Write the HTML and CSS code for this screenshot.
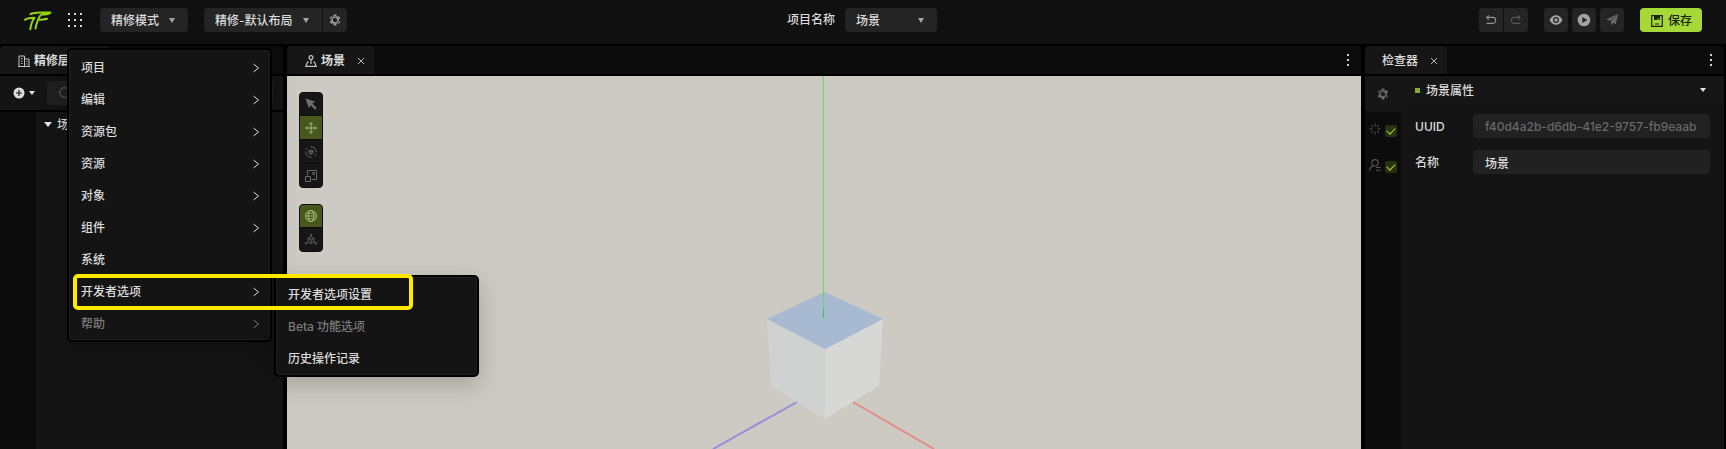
FILE: index.html
```html
<!DOCTYPE html>
<html lang="zh-CN">
<head>
<meta charset="utf-8">
<title>场景编辑器</title>
<link rel="stylesheet" href="styles.css">
</head>
<body>
<div class="app">
  <header class="topbar">
    <div class="topbar-left">
      <svg class="logo" viewBox="0 0 28 21" width="28" height="21" aria-hidden="true">
        <g fill="none" stroke="#93d414" stroke-linecap="round" stroke-linejoin="round">
          <path d="M6.500 4.200C9 2.800 12 2.500 16 2.500H26.500C25 4.300 22 4.600 18 4.600C15 4.800 12 15 11.500 18.500" stroke-width="2"/>
          <path d="M15.500 9.800C18.500 9.300 20.500 9.600 23 8.800" stroke-width="2"/>
          <path d="M1 9.800C3.500 8.200 6 7.800 10.500 7.800C8.500 10 7 14 6.300 19.300" stroke-width="2"/>
        </g>
      </svg>
      <button class="apps" aria-label="菜单">
        <svg viewBox="0 0 14 14" width="14" height="14" fill="#d8d8d8"><path d="M0 0h2v2H0zM6 0h2v2H6zM12 0h2v2h-2zM0 6h2v2H0zM6 6h2v2H6zM12 6h2v2h-2zM0 12h2v2H0zM6 12h2v2H6zM12 12h2v2h-2z"/></svg>
      </button>
      <span class="select mode"><select aria-label="模式"><option>精修模式</option></select></span>
      <div class="joined">
        <span class="select layout"><select aria-label="布局"><option>精修-默认布局</option></select></span>
        <button class="tool" aria-label="布局设置"><svg class="gear" viewBox="0 0 24 24" width="12" height="12"><use href="#gear"/></svg></button>
      </div>
    </div>
    <div class="project">
      <label for="project">项目名称</label>
      <span class="select scene"><select id="project"><option>场景</option></select></span>
    </div>
    <div class="topbar-right">
      <div class="joined">
        <button class="tool" aria-label="撤销"><svg viewBox="0 0 14 14" width="12" height="12" fill="none" stroke="#929292" stroke-width="1.300"><path d="M4.500 1.500L2 4l2.500 2.500M2 4h7a3.500 3.500 0 0 1 0 7H2"/></svg></button>
        <button class="tool" aria-label="重做"><svg viewBox="0 0 14 14" width="12" height="12" fill="none" stroke="#575757" stroke-width="1.300"><path d="M9.500 1.500L12 4L9.500 6.500M12 4H5a3.500 3.500 0 0 0 0 7h7"/></svg></button>
      </div>
      <div class="actions">
        <button class="tool" aria-label="预览"><svg viewBox="0 0 14 14" width="14" height="14"><path d="M.5 7C2 4 4.200 2.200 7 2.200S12 4 13.500 7C12 10 9.800 11.800 7 11.800S2 10 .5 7z" fill="#a2a2a2"/><circle cx="7" cy="7" r="3" fill="#292929"/><circle cx="7" cy="7" r="1.700" fill="#a2a2a2"/></svg></button>
        <button class="tool" aria-label="播放"><svg viewBox="0 0 14 14" width="14" height="14"><circle cx="7" cy="7" r="6.300" fill="#a2a2a2"/><path d="M5.300 4v6l5-3z" fill="#242424"/></svg></button>
        <button class="tool" aria-label="发布"><svg viewBox="0 0 14 14" width="14" height="14" fill="#686868"><path d="M13 1L1 6.500l4.300 1.200zM13 1L5.900 8.200l.3 4.500 1.900-2.900 2.700 1.400z"/></svg></button>
      </div>
      <button class="save"><svg viewBox="0 0 12 12" width="12" height="12"><path d="M.7.7h10.600v10.600H.7z" fill="none" stroke="#1b230a" stroke-width="1.200"/><path d="M3 1h6v4H7.500V3h-1v2H3zM4 8.500h4v1H4z" fill="#1b230a"/></svg>保存</button>
    </div>
  </header>

  <main class="workspace">
    <section class="panel hierarchy">
      <div class="tabs">
        <div class="tab tab-hierarchy">
          <svg viewBox="0 0 12 12" width="12" height="12" fill="none" stroke="#c4c4c4"><path d="M1 11.300V1h5.500v10.300M6.500 4H11v7.300M0 11.500h12M3 3.500h1.500M3 6h1.500M3 8.500h1.500M8.200 6.500h1.200M8.200 9h1.200"/></svg>
          <span>精修层级</span>
        </div>
      </div>
      <div class="hierarchy-bar">
        <button class="add" aria-label="添加"><svg viewBox="0 0 12 12" width="12" height="12"><circle cx="6" cy="6" r="5.500" fill="#dedede"/><path d="M6 3v6M3 6h6" stroke="#161616" stroke-width="1.200"/></svg><i class="caret"></i></button>
        <label class="search"><svg viewBox="0 0 12 12" width="12" height="12" fill="none" stroke="#686868"><circle cx="5.500" cy="5.500" r="4.800"/><path d="M9 9l2.500 2.500"/></svg><input type="search" aria-label="搜索"></label>
      </div>
      <div class="tree">
        <div class="tree-gutter"></div>
        <div class="tree-row"><i class="caret tree-caret"></i>场景</div>
      </div>
    </section>

    <section class="panel viewport">
      <div class="tabs">
        <div class="tab tab-scene">
          <svg viewBox="0 0 12 12" width="12" height="12" fill="none" stroke="#c4c4c4" stroke-width="1.200"><circle cx="6" cy="2.500" r="1.900"/><path d="M6 4.500V9M3.700 7H2.500L.8 11.300h10.400L9.500 7H8.300"/></svg>
          <span>场景</span>
          <button class="close" aria-label="关闭"><svg viewBox="0 0 8 8" width="8" height="8"><path d="M1 1l6 6M7 1L1 7"/></svg></button>
        </div>
        <button class="more" aria-label="更多"><svg viewBox="0 0 2 12" width="2" height="12"><path d="M0 0h2v2H0zM0 5h2v2H0zM0 10h2v2H0z"/></svg></button>
      </div>
      <div class="stage">
        <svg class="scene3d" viewBox="0 0 1074 373" preserveAspectRatio="xMidYMin slice" role="img" aria-label="立方体">
          <path d="M510 326L426 373" stroke="#958cdc" stroke-width="2"/>
          <path d="M566 326L647 373" stroke="#e58b85" stroke-width="2"/>
          <path d="M480 243L538 273V343L484 310z" fill="#d0d2d1"/>
          <path d="M596 243L538 273V343L592 310z" fill="#d7d7d5"/>
          <path d="M537.500 216L596 243L538 273L480 243z" fill="#a8b9d2"/>
          <path d="M536.500 0V242" stroke="#62e05e"/>
          <path d="M536.500 233V242" stroke="#2fcb4b"/>
        </svg>
        <div class="toolbars">
          <div class="toolset">
            <button aria-label="选择"><svg viewBox="0 0 12 12" width="12" height="12" fill="#6e6e6e"><path d="M.5.5l9.800 3.300-3 1.800 4.400 4.500-1.600 1.600-4.400-4.500-1.900 3z"/></svg></button>
            <button class="on" aria-label="移动"><svg viewBox="0 0 12 12" width="12" height="12" fill="none" stroke="#a9bd7b"><path d="M6 .7v10.600M.7 6h10.600M4.300 2.300L6 .7l1.700 1.600M4.300 9.700L6 11.300l1.700-1.600M2.300 4.300L.7 6l1.600 1.700M9.700 4.300L11.300 6 9.700 7.700"/></svg></button>
            <button aria-label="旋转"><svg viewBox="0 0 12 12" width="12" height="12" fill="none" stroke="#666"><path d="M5.500.7A5.300 5.300 0 0 1 11.300 6.500M.7 5.500A5.300 5.300 0 0 0 6.500 11.300M1 3.700L2.300 2M9.700 10L11 8.300"/><path d="M6 3.700l2.200 1.200v2.300L6 8.400 3.800 7.200V4.900zM3.800 4.900L6 6l2.200-1.100M6 6v2.400"/></svg></button>
            <button aria-label="缩放"><svg viewBox="0 0 12 12" width="12" height="12" fill="none" stroke="#666"><path d="M2.500 5.500v-5h9v9h-5M.5 6.500h5v5h-5zM7 5L9 3M7 2.700h2.300V5"/></svg></button>
          </div>
          <div class="toolset">
            <button class="on" aria-label="世界坐标"><svg viewBox="0 0 12 12" width="12" height="12" fill="none" stroke="#a9bd7b" stroke-width=".9"><circle cx="6" cy="6" r="5.500"/><ellipse cx="6" cy="6" rx="2.800" ry="5.500"/><path d="M.5 6h11M1.500 3.200h9M1.500 8.800h9"/></svg></button>
            <button aria-label="本地坐标"><svg viewBox="0 0 12 12" width="12" height="12" fill="none" stroke="#666" stroke-width=".9"><path d="M6 2.700l3 1.600v3.500L6 9.500 3 7.800V4.300zM3 4.300L6 6l3-1.700M6 6v3.500M6 .3v2.400M3 7.800L.5 9.700M9 7.800l2.500 1.900M5 1.200l1-.9 1 .9M.5 8.300v1.600h1.700M11.500 8.300v1.600H9.800"/></svg></button>
          </div>
        </div>
      </div>
    </section>

    <section class="panel inspector">
      <div class="tabs">
        <div class="tab tab-inspector"><span>检查器</span>
          <button class="close" aria-label="关闭"><svg viewBox="0 0 8 8" width="8" height="8"><path d="M1 1l6 6M7 1L1 7"/></svg></button>
        </div>
        <button class="more" aria-label="更多"><svg viewBox="0 0 2 12" width="2" height="12"><path d="M0 0h2v2H0zM0 5h2v2H0zM0 10h2v2H0z"/></svg></button>
      </div>
      <div class="inspector-body">
        <div class="rail">
          <button class="rail-tab" aria-label="属性"><svg class="gear dim" viewBox="0 0 24 24" width="12" height="12"><use href="#gear"/></svg></button>
          <label class="rail-item"><svg viewBox="0 0 12 12" width="12" height="12" fill="none" stroke="#5a5a5a"><path d="M6 .5v3M6 8.500v3M.5 6h3M8.500 6h3M2.100 2.100l2 2M7.900 7.900l2 2M2.100 9.900l2-2M7.900 4.100l2-2"/></svg><input type="checkbox" checked aria-label="特效"></label>
          <label class="rail-item"><svg viewBox="0 0 12 12" width="12" height="12" fill="none" stroke="#5a5a5a" stroke-width="1.100"><circle cx="6" cy="3.800" r="3.200"/><path d="M4.300 6.700C2 7.500.8 9 .6 11.800M7 8.500h4.500M7 11.300h4.500"/></svg><input type="checkbox" checked aria-label="角色"></label>
        </div>
        <div class="properties">
          <button class="section-title"><i class="mark"></i>场景属性<i class="caret"></i></button>
          <div class="fields">
            <label for="uuid">UUID</label><input id="uuid" class="muted" value="f40d4a2b-d6db-41e2-9757-fb9eaab" readonly>
            <label for="name">名称</label><input id="name" value="场景">
          </div>
        </div>
      </div>
    </section>
  </main>

  <ul class="menu main-menu">
    <li><button>项目<svg class="chev" viewBox="0 0 6 8"><path d="M.5 0L5.500 4 .5 8"/></svg></button></li>
    <li><button>编辑<svg class="chev" viewBox="0 0 6 8"><path d="M.5 0L5.500 4 .5 8"/></svg></button></li>
    <li><button>资源包<svg class="chev" viewBox="0 0 6 8"><path d="M.5 0L5.500 4 .5 8"/></svg></button></li>
    <li><button>资源<svg class="chev" viewBox="0 0 6 8"><path d="M.5 0L5.500 4 .5 8"/></svg></button></li>
    <li><button>对象<svg class="chev" viewBox="0 0 6 8"><path d="M.5 0L5.500 4 .5 8"/></svg></button></li>
    <li><button>组件<svg class="chev" viewBox="0 0 6 8"><path d="M.5 0L5.500 4 .5 8"/></svg></button></li>
    <li><button>系统</button></li>
    <li><button>开发者选项<svg class="chev" viewBox="0 0 6 8"><path d="M.5 0L5.500 4 .5 8"/></svg></button></li>
    <li><button class="faded">帮助<svg class="chev" viewBox="0 0 6 8"><path d="M.5 0L5.500 4 .5 8"/></svg></button></li>
  </ul>
  <ul class="menu sub-menu">
    <li><button>开发者选项设置</button></li>
    <li><button class="faded">Beta 功能选项</button></li>
    <li><button>历史操作记录</button></li>
  </ul>
  <div class="highlight"></div>
</div>
<svg class="defs" aria-hidden="true">
  <symbol id="gear" viewBox="0 0 24 24"><path d="M12 4a8 8 0 1 0 0 16 8 8 0 1 0 0-16zM9.500 1h5l.8 4H8.700zM9.500 23h5l.8-4H8.700zM1.500 8.500L4 4.300l4 1.500-3 5.300zM22.500 8.500L20 4.300l-4 1.500 3 5.300zM1.500 15.500L4 19.700l4-1.500-3-5.300zM22.500 15.500L20 19.700l-4-1.500 3-5.300z"/><circle class="gear-hole" cx="12" cy="12" r="4.500"/></symbol>
</svg>
</body>
</html>
```
FILE: styles.css
```css
* { box-sizing: border-box; }
body {
  margin: 0;
  background: #000;
  color: #dcdcdc;
  font: 500 12px/16px Inter, "Noto Sans CJK SC", sans-serif;
}
button, input, select { font: inherit; color: inherit; border: 0; margin: 0; padding: 0; background: none; outline: 0; }
button { display: inline-flex; align-items: center; }
svg { display: block; flex: none; }
.defs { position: absolute; width: 0; height: 0; }
.app { position: relative; display: flex; flex-direction: column; min-height: 100vh; overflow: hidden; }

.topbar {
  display: grid;
  grid-template-columns: 1fr auto 1fr;
  align-items: center;
  padding: 8px 24px 12px 22px;
  background: #101010;
}
.topbar-left, .topbar-right, .project, .joined, .actions { display: flex; align-items: center; }
.topbar-left { gap: 16px; padding-left: 2px; }
.topbar-right { justify-content: flex-end; gap: 16px; }
.apps { margin-right: 2px; }
.project { gap: 10px; }
.joined { gap: 1px; }
.actions { gap: 4px; }
.joined > :first-child, .joined > :first-child select { border-radius: 4px 0 0 4px; }
.joined > :last-child { border-radius: 0 4px 4px 0; }
.select { position: relative; display: block; }
.select::after {
  content: "";
  position: absolute;
  right: 13px;
  top: 10px;
  border: 3px solid transparent;
  border-top: 5px solid #a4a4a4;
  border-bottom: 0;
  pointer-events: none;
}
.select select { appearance: none; width: 100%; height: 24px; padding: 2px 11px 0; border-radius: 4px; background: #242424; }
.mode { width: 88px; }
.layout { width: 118px; }
.scene { width: 92px; }
.tool { justify-content: center; width: 24px; height: 24px; border-radius: 4px; background: #242424; }
.gear { fill: #9a9a9a; }
.gear-hole { fill: #202020; }
.gear.dim { fill: #6c6c6c; }
.save { gap: 5px; height: 24px; padding: 1px 10px 0 11px; border-radius: 4px; background: #a5d838; color: #1b230a; }

.workspace {
  flex: 1;
  display: grid;
  grid-template-columns: 283px minmax(0, 1fr) 359px;
  gap: 4px;
  padding: 2px 2px 0 0;
}
.panel { display: flex; flex-direction: column; min-width: 0; }
.tabs { display: flex; justify-content: space-between; height: 28px; margin-bottom: 2px; border-radius: 4px 4px 0 0; background: #0c0c0c; overflow: hidden; }
.tab { display: flex; align-items: center; gap: 4px; padding-top: 2px; background: #161616; font-weight: 700; border-radius: 4px 4px 0 0; }
.tab-hierarchy { width: 110px; padding-left: 18px; }
.tab-scene { padding-left: 18px; padding-right: 9px; }
.tab-inspector { padding-left: 17px; padding-right: 9px; font-weight: 500; }
.close { margin-left: 8px; stroke: #b8b8b8; }
.more { padding: 0 12px; fill: #cfcfcf; }
.caret { display: block; border: 3px solid transparent; border-top: 4px solid #e4e4e4; border-bottom: 0; }

.hierarchy-bar { display: flex; align-items: center; gap: 12px; height: 34px; margin-bottom: 2px; padding: 0 10px 0 13px; background: #141414; }
.add { gap: 4px; }
.search { flex: 1; display: flex; align-items: center; gap: 4px; height: 24px; padding-left: 12px; border-radius: 4px; background: #202020; }
.search input { flex: 1; min-width: 0; }
.tree { flex: 1; display: grid; grid-template-columns: 36px 1fr; background: #141414; }
.tree-gutter { background: #0c0c0c; }
.tree-row { display: flex; align-items: center; gap: 5px; height: 26px; padding-left: 8px; }
.tree-caret { border-width: 5px 4px 0; margin-bottom: 2px; }

.stage { flex: 1; display: grid; grid-template: 1fr / 1fr; min-height: 0; background: #cdcac3; }
.scene3d, .toolbars { grid-area: 1 / 1; }
.scene3d { width: 100%; height: 373px; }
.toolbars { display: flex; flex-direction: column; align-items: flex-start; gap: 16px; padding: 16px 12px; z-index: 1; }
.toolset { display: grid; width: 24px; border: 1px solid #0e0e0e; border-radius: 4px; background: #161616; overflow: hidden; }
.toolset button { justify-content: center; height: 24px; border-bottom: 1px solid #0e0e0e; }
.toolset button:first-child, .toolset button:last-child { height: 23px; }
.toolset button:last-child { border-bottom: 0; }
.toolset .on { background: #47571d; }

.inspector-body { flex: 1; display: grid; grid-template-columns: 36px minmax(0, 1fr); background: #141414; }
.rail { background: #0c0c0c; }
.rail-tab { justify-content: center; width: 100%; height: 36px; background: #161616; border-radius: 0 0 0 4px; }
.rail-item { display: flex; align-items: center; gap: 4px; height: 36px; padding: 2px 0 0 4px; }
.rail-item svg { margin-bottom: 4px; }
.rail-item input {
  appearance: none;
  display: grid;
  place-items: center;
  width: 12px;
  height: 12px;
  border-radius: 2px;
  background: #29320f;
}
.rail-item input::before { content: ""; width: 7px; height: 4px; border: solid #a5d838; border-width: 0 0 1px 1px; transform: rotate(-45deg) translate(1px, -1px); }
.section-title { width: 100%; height: 28px; padding: 2px 18px 0 14px; background: #161616; }
.section-title .caret { margin-left: auto; margin-bottom: 2px; }
.mark { width: 5px; height: 5px; margin: 0 6px 2px 0; background: #85ac30; }
.fields { display: grid; grid-template-columns: 58px minmax(0, 1fr); gap: 12px 0; align-items: center; padding: 10px 14px; }
.fields label { padding-top: 2px; }
.fields input { width: 100%; height: 24px; padding: 0 12px; border-radius: 4px; background: #212121; }
.fields .muted { color: #686868; }

.menu {
  position: absolute;
  margin: 0;
  padding: 1px;
  list-style: none;
  border: 2px solid #000;
  border-radius: 5px;
  background: #141414;
  box-shadow: inset 0 0 0 1px #1e1e1e, 0 8px 24px rgba(0, 0, 0, .2);
}
.menu button { display: flex; justify-content: space-between; width: 100%; height: 32px; padding: 2px 10px 0 11px; }
.main-menu { top: 48px; left: 67px; width: 205px; }
.sub-menu { top: 275px; left: 274px; width: 205px; }
.chev { width: 6px; height: 8px; fill: none; stroke: currentColor; overflow: visible; }
.faded { color: #7a7a7a; }
.highlight {
  position: absolute;
  top: 274px;
  left: 73px;
  width: 340px;
  height: 36px;
  border: 4px solid #ffea00;
  border-radius: 5px;
  pointer-events: none;
}
```
